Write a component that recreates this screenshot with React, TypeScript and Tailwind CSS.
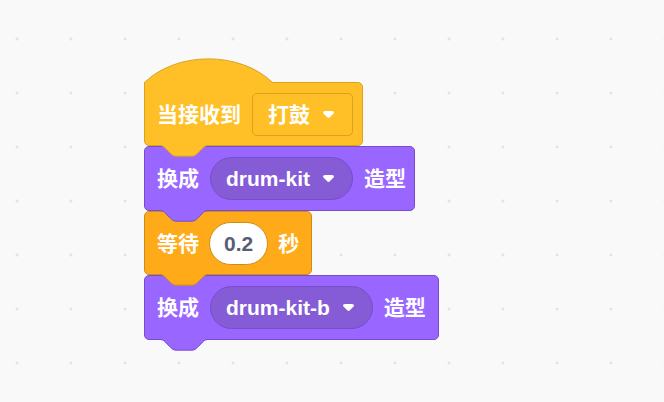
import type { ReactNode } from "react"

const FONT = "font-['Liberation_Sans','Noto_Sans_CJK_SC',sans-serif]"

function Arrow() {
  return (
    <svg width="13" height="9" viewBox="0 0 12.71 8.79" className="shrink-0">
      <path
        d="M6.36,7.79a1.43,1.43,0,0,1-1-.42L1.42,3.45a1.44,1.44,0,0,1,0-2c0.56-.56,9.31-.56,9.87,0a1.44,1.44,0,0,1,0,2L7.37,7.37A1.43,1.43,0,0,1,6.36,7.79Z"
        fill="#ffffff"
      />
    </svg>
  )
}

// tab sticking out under a block, drawn over the next block's notch
function Tab({ fill, stroke }: { fill: string; stroke: string }) {
  const edge = "c 2,0 3,1 4,2 l 4,4 c 1,1 2,2 4,2 h 12 c 2,0 3,-1 4,-2 l 4,-4 c 1,-1 2,-2 4,-2"
  return (
    <svg
      className="absolute left-[15px] top-full z-10 overflow-visible"
      width="48"
      height="12"
      viewBox="0 -0.375 36 9"
    >
      <path d={`M0,-0.8 L0,0 ${edge} L36,-0.8 Z`} fill={fill} />
      <path d={`M0,0 ${edge}`} fill="none" stroke={stroke} strokeWidth="0.75" />
    </svg>
  )
}

type Tone = { bg: string; border: string; fill: string; stroke: string }

const EVENTS: Tone = { bg: "bg-[#ffbf26]", border: "border-[#d9a21f]", fill: "#ffbf26", stroke: "#d9a21f" }
const LOOKS: Tone = { bg: "bg-[#9966ff]", border: "border-[#774dcb]", fill: "#9966ff", stroke: "#774dcb" }
const CONTROL: Tone = { bg: "bg-[#ffab19]", border: "border-[#cf8b17]", fill: "#ffab19", stroke: "#cf8b17" }

function Block({ tone, className, children }: { tone: Tone; className: string; children: ReactNode }) {
  return (
    <div className={`relative flex w-fit items-center rounded-[5px] border pl-[12px] ${tone.bg} ${tone.border} ${className}`}>
      {children}
      <Tab fill={tone.fill} stroke={tone.stroke} />
    </div>
  )
}

function Label({ children }: { children: ReactNode }) {
  return <span className="whitespace-nowrap text-[21px] font-bold leading-none text-white">{children}</span>
}

function Dropdown({ children }: { children: ReactNode }) {
  return (
    <div className="flex h-[43px] items-center gap-[12px] rounded-full border border-[#774dcb] bg-[#855cd6] pl-[15px] pr-[17px]">
      <Label>{children}</Label>
      <Arrow />
    </div>
  )
}

export default function App() {
  return (
    <div className={`relative h-[402px] w-[664px] overflow-hidden bg-[#f9f9f9] ${FONT}`}>
      <svg className="absolute inset-0" width="664" height="402">
        <defs>
          <pattern id="grid" x="17" y="39" width="54" height="54" patternUnits="userSpaceOnUse">
            <rect x="-1.5" y="-0.5" width="3" height="1" fill="#dcdcdc" />
            <rect x="-0.5" y="-1.5" width="1" height="3" fill="#dcdcdc" />
            <rect x="52.5" y="-0.5" width="3" height="1" fill="#dcdcdc" />
            <rect x="53.5" y="-1.5" width="1" height="3" fill="#dcdcdc" />
            <rect x="-1.5" y="53.5" width="3" height="1" fill="#dcdcdc" />
            <rect x="-0.5" y="52.5" width="1" height="3" fill="#dcdcdc" />
            <rect x="52.5" y="53.5" width="3" height="1" fill="#dcdcdc" />
            <rect x="53.5" y="52.5" width="1" height="3" fill="#dcdcdc" />
          </pattern>
        </defs>
        <rect width="664" height="402" fill="url(#grid)" />
      </svg>

      <div className="absolute left-[144px] top-[82px] flex flex-col">
        {/* when I receive */}
        <Block tone={EVENTS} className="h-[64px] gap-[11px] rounded-tl-none pr-[9px]">
          <svg className="absolute -left-px bottom-full" width="130" height="26" viewBox="0 0 130 26">
            <path d="M0.5,25.5 C33,-6 96,-6 128.5,25.5 L128.5,26.2 L1,26.2 Z" fill="#ffbf26" />
            <path d="M0.5,25.5 C33,-6 96,-6 128.5,25.5" fill="none" stroke="#d9a21f" strokeWidth="1" />
          </svg>
          <Label>当接收到</Label>
          <div className="flex h-[43px] items-center gap-[12px] rounded-[5px] border border-[#d9a21f] bg-[#ffbf26] pl-[15px] pr-[17px]">
            <Label>打鼓</Label>
            <Arrow />
          </div>
        </Block>

        <Block tone={LOOKS} className="h-[65px] gap-[11px] pr-[8px]">
          <Label>换成</Label>
          <Dropdown>drum-kit</Dropdown>
          <Label>造型</Label>
        </Block>

        <Block tone={CONTROL} className="h-[64px] gap-[10px] pr-[12px]">
          <Label>等待</Label>
          <div className="flex h-[43px] items-center rounded-full border border-[#cf8b17] bg-white px-[14px]">
            <span className="text-[21px] font-bold leading-none text-[#575e75]">0.2</span>
          </div>
          <Label>秒</Label>
        </Block>

        <Block tone={LOOKS} className="h-[65px] gap-[11px] pr-[12px]">
          <Label>换成</Label>
          <Dropdown>drum-kit-b</Dropdown>
          <Label>造型</Label>
        </Block>
      </div>
    </div>
  )
}
